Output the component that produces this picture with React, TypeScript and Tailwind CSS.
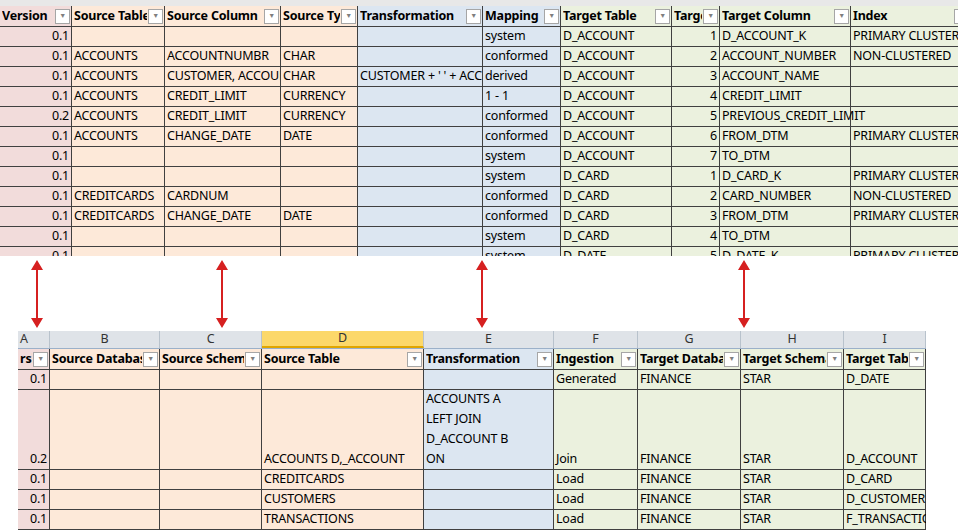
const PINK = 'bg-[#f2dcdb]'
const PEACH = 'bg-[#fde9d9]'
const BLUE = 'bg-[#dce6f1]'
const GREEN = 'bg-[#ebf1de]'

type Col = { w: number; h: string; bg: string; right?: boolean }

const topCols: Col[] = [
  { w: 72, h: 'Version', bg: PINK, right: true },
  { w: 93, h: 'Source Table', bg: PEACH },
  { w: 116, h: 'Source Column', bg: PEACH },
  { w: 77, h: 'Source Ty', bg: PEACH },
  { w: 125, h: 'Transformation', bg: BLUE },
  { w: 78, h: 'Mapping', bg: BLUE },
  { w: 111, h: 'Target Table', bg: GREEN },
  { w: 48, h: 'Targe', bg: GREEN, right: true },
  { w: 131, h: 'Target Column', bg: GREEN },
  { w: 120, h: 'Index', bg: GREEN },
]

const topRows = [
  ['0.1', '', '', '', '', 'system', 'D_ACCOUNT', '1', 'D_ACCOUNT_K', 'PRIMARY CLUSTERED'],
  ['0.1', 'ACCOUNTS', 'ACCOUNTNUMBR', 'CHAR', '', 'conformed', 'D_ACCOUNT', '2', 'ACCOUNT_NUMBER', 'NON-CLUSTERED'],
  ['0.1', 'ACCOUNTS', 'CUSTOMER, ACCOUNT', 'CHAR', "CUSTOMER + ' ' + ACCOUNT", 'derived', 'D_ACCOUNT', '3', 'ACCOUNT_NAME', ''],
  ['0.1', 'ACCOUNTS', 'CREDIT_LIMIT', 'CURRENCY', '', '1 - 1', 'D_ACCOUNT', '4', 'CREDIT_LIMIT', ''],
  ['0.2', 'ACCOUNTS', 'CREDIT_LIMIT', 'CURRENCY', '', 'conformed', 'D_ACCOUNT', '5', 'PREVIOUS_CREDIT_LIMIT', ''],
  ['0.1', 'ACCOUNTS', 'CHANGE_DATE', 'DATE', '', 'conformed', 'D_ACCOUNT', '6', 'FROM_DTM', 'PRIMARY CLUSTERED'],
  ['0.1', '', '', '', '', 'system', 'D_ACCOUNT', '7', 'TO_DTM', ''],
  ['0.1', '', '', '', '', 'system', 'D_CARD', '1', 'D_CARD_K', 'PRIMARY CLUSTERED'],
  ['0.1', 'CREDITCARDS', 'CARDNUM', '', '', 'conformed', 'D_CARD', '2', 'CARD_NUMBER', 'NON-CLUSTERED'],
  ['0.1', 'CREDITCARDS', 'CHANGE_DATE', 'DATE', '', 'conformed', 'D_CARD', '3', 'FROM_DTM', 'PRIMARY CLUSTERED'],
  ['0.1', '', '', '', '', 'system', 'D_CARD', '4', 'TO_DTM', ''],
  ['0.1', '', '', '', '', 'system', 'D_DATE', '5', 'D_DATE_K', 'PRIMARY CLUSTERED'],
]

const botCols: (Col & { l: string; sel?: boolean })[] = [
  { w: 32, h: 'rsio', bg: PINK, right: true, l: 'A' },
  { w: 110, h: 'Source Database', bg: PEACH, l: 'B' },
  { w: 102, h: 'Source Schema', bg: PEACH, l: 'C' },
  { w: 162, h: 'Source Table', bg: PEACH, l: 'D', sel: true },
  { w: 130, h: 'Transformation', bg: BLUE, l: 'E' },
  { w: 84, h: 'Ingestion', bg: GREEN, l: 'F' },
  { w: 103, h: 'Target Database', bg: GREEN, l: 'G' },
  { w: 103, h: 'Target Schema', bg: GREEN, l: 'H' },
  { w: 82, h: 'Target Table', bg: GREEN, l: 'I' },
]

const botRows: { h: number; c: string[] }[] = [
  { h: 20, c: ['0.1', '', '', '', '', 'Generated', 'FINANCE', 'STAR', 'D_DATE'] },
  { h: 80, c: ['0.2', '', '', 'ACCOUNTS D,_ACCOUNT', 'ACCOUNTS A\nLEFT JOIN\nD_ACCOUNT B\nON', 'Join', 'FINANCE', 'STAR', 'D_ACCOUNT'] },
  { h: 20, c: ['0.1', '', '', 'CREDITCARDS', '', 'Load', 'FINANCE', 'STAR', 'D_CARD'] },
  { h: 20, c: ['0.1', '', '', 'CUSTOMERS', '', 'Load', 'FINANCE', 'STAR', 'D_CUSTOMER'] },
  { h: 20, c: ['0.1', '', '', 'TRANSACTIONS', '', 'Load', 'FINANCE', 'STAR', 'F_TRANSACTIONS'] },
]

function Filter() {
  return (
    <span className="ml-[1px] flex h-[15px] w-[15px] shrink-0 items-center justify-center border border-[#a6a6a6] bg-white text-[7px] text-[#7f7f7f]">
      ▼
    </span>
  )
}

function HeaderCell({ c }: { c: Col }) {
  return (
    <div
      className={`flex h-[20px] shrink-0 items-center whitespace-nowrap border-r border-[#404040] pl-[2px] pr-[1px] font-bold ${c.bg}`}
      style={{ width: c.w }}
    >
      <span className="min-w-0 flex-1 overflow-hidden">{c.h}</span>
      <Filter />
    </div>
  )
}

function Cell({ c, v, h, spill }: { c: Col; v: string; h: number; spill: boolean }) {
  return (
    <div
      className={`flex shrink-0 items-end whitespace-pre border-r border-[#404040] px-[2px] leading-[20px] ${c.bg} ${c.right ? 'justify-end' : ''} ${spill ? 'overflow-visible' : 'overflow-hidden'}`}
      style={{ width: c.w, height: h }}
    >
      <span className="relative z-10">{v}</span>
    </div>
  )
}

function Arrow() {
  return (
    <svg width="14" height="68" viewBox="0 0 14 68">
      <line x1="7" y1="6" x2="7" y2="62" stroke="#d62020" strokeWidth="2" />
      <path d="M1 10 L7 0 L13 10 Z M1 58 L7 68 L13 58 Z" fill="#d62020" />
    </svg>
  )
}

export default function App() {
  return (
    <div className="relative h-[531px] w-[958px] overflow-hidden bg-white font-['Carlito','Liberation_Sans_Narrow','Liberation_Sans',sans-serif] text-[12.5px] tracking-[-0.2px] text-black">
      {/* top sheet */}
      <div className="h-[256px] overflow-hidden">
        <div className="h-[6px] bg-[#e8e8e8]" />
        <div className="flex border-b border-[#404040]">
          {topCols.map((c) => (
            <HeaderCell key={c.h} c={c} />
          ))}
        </div>
        {topRows.map((r, i) => (
          <div key={i} className="flex border-b border-[#404040]">
            {r.map((v, j) => (
              <Cell key={j} c={topCols[j]} v={v} h={19} spill={j + 1 >= r.length || r[j + 1] === ''} />
            ))}
          </div>
        ))}
      </div>

      {/* arrows */}
      <div className="relative h-[75px]">
        <div className="absolute left-[30px] top-[4px]"><Arrow /></div>
        <div className="absolute left-[215px] top-[4px]"><Arrow /></div>
        <div className="absolute left-[475px] top-[4px]"><Arrow /></div>
        <div className="absolute left-[737px] top-[4px]"><Arrow /></div>
      </div>

      {/* bottom sheet */}
      <div className="ml-[18px] w-[908px] overflow-hidden">
        <div className="flex h-[18px] border-b border-[#9bb0c9] bg-[#dfe3e8] text-[#333]">
          {botCols.map((c) => (
            <div
              key={c.l}
              className={`flex shrink-0 items-center border-r border-[#b8c2cc] ${c.sel ? 'justify-center bg-[#fcd86a] border-b-2 border-b-[#e0a600]' : c.l === 'A' ? 'pl-[2px]' : 'justify-center'}`}
              style={{ width: c.w }}
            >
              {c.l}
            </div>
          ))}
        </div>
        <div className="flex border-b border-[#404040]">
          {botCols.map((c) => (
            <HeaderCell key={c.l} c={c} />
          ))}
        </div>
        {botRows.map((r, i) => (
          <div key={i} className="flex border-b border-[#404040]">
            {r.c.map((v, j) => (
              <Cell key={j} c={botCols[j]} v={v} h={r.h - 1} spill={j === r.c.length - 1} />
            ))}
          </div>
        ))}
      </div>
    </div>
  )
}
